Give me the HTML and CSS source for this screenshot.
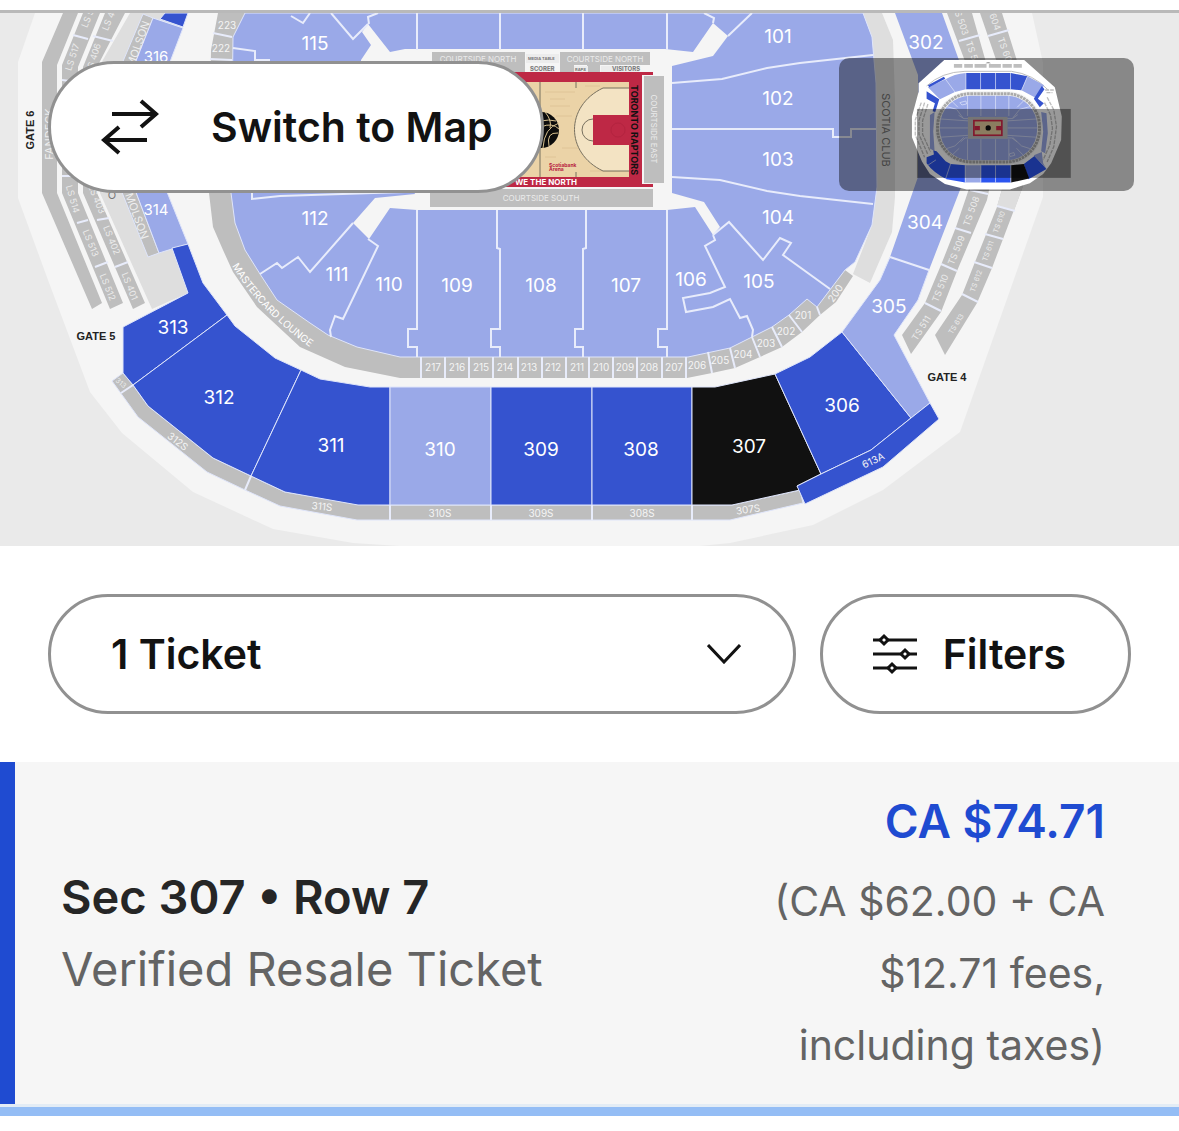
FILE: index.html
```html
<!DOCTYPE html>
<html lang="en">
<head>
    <meta charset="UTF-8">
    <meta name="viewport" content="width=device-width, initial-scale=1.0">
    <title>Tickets</title>
    <link rel="stylesheet" href="styles.css">
</head>
<body>
    <div class="map-panel">
        <!-- Seat map -->
        <svg class="seat-map" viewBox="0 13 1179 533" role="img" aria-label="Seat map">
            <polygon class="ground" points="35,13 18,62 18,198 48,280 90,392 122,433 193,492 273,529 353,543 400,546 700,546 730,543 813,525 883,490 960,432 1043,197 1043,63 1032,13"/>

            <!-- West side suites -->
            <polygon class="pale" points="130,13 188,13 160,75 160,170 172,248 188,293 152,309 100,193 100,65"/>
            <polygon class="grey" points="63,13 42,62 42,193 92,309 102,303 57,193 57,65 78,13"/>
            <polygon class="grey" points="83,13 62,65 62,193 110,309 123,303 78,193 78,67 100,13"/>
            <polygon class="grey" points="105,13 83,67 83,193 133,309 145,303 97,193 97,67 125,13"/>
            <polygon class="grey edge" points="143,14 153,18 134,66 134,187 159,253 148,257 121,190 121,66"/>
            <path class="line" d="M73,35 88,39M93,36 113,41M62,80 78,82M62,176 78,176M77,223 88,220M95,267 108,262M97,220 109,218M115,267 128,262"/>

            <!-- 300 level -->
            <polygon class="dark edge" points="165,13 160,19 183,27 188,13"/>
            <polygon class="light edge" points="153,18 183,28 165,75 165,187 188,244 159,253 134,187 134,66"/>
            <polygon class="grey edge" points="112,381 123,373 133,385 148,406 213,458 251,476 285,492 358,504 390,505 732,505 800,490 803,503 730,520 357,520 280,506 245,490 207,472 138,417"/>
            <polygon class="dark edge" points="172,248 188,244 203,283 227,315 133,385 123,373 123,327 188,293"/>
            <polygon class="dark edge" points="227,315 235,326 275,358 301,370 251,476 213,458 148,406 133,385"/>
            <polygon class="dark edge" points="301,370 320,379 370,387 390,387 390,505 358,505 285,492 251,476"/>
            <polygon class="light edge" points="390,387 491,387 491,505 390,505"/>
            <polygon class="dark edge" points="491,387 592,387 592,505 491,505"/>
            <polygon class="dark edge" points="592,387 692,387 692,505 592,505"/>
            <polygon class="picked edge" points="692,387 715,387 775,374 821,474 797,486 800,490 732,505 692,505"/>
            <polygon class="dark edge" points="775,374 810,357 842,332 911,418 871,450 821,474"/>
            <polygon class="light edge" points="842,332 880,280 890,257 929,270 918,300 894,335 930,403 911,418"/>
            <polygon class="dark edge" points="797,486 821,474 871,450 911,418 930,403 939,419 883,467 805,504"/>
            <polygon class="light" points="895,13 942,13 965,77 965,177 929,270 890,257 918,177 918,75"/>
            <path class="line" d="M890,257 929,270M133,385 121,393M251,476 245,490M390,505V520M491,505V520M592,505V520M692,505V520"/>

            <!-- East side suites -->
            <polygon class="grey" points="947,13 972,80 972,180 956,227 941,265 925,303 902,335 911,354 941,312 957,271 987,200 991,180 991,80 972,13"/>
            <polygon class="grey" points="980,13 1003,80 1003,186 997,207 975,262 962,295 935,335 945,355 977,303 992,268 1014,210 1023,186 1023,80 1002,13"/>
            <polygon class="pale" points="1003,186 1023,186 1014,211 997,206"/>
            <path class="line" d="M959,41 980,35M988,36 1009,30M970,190 988,194M955,228 971,233M941,264 957,271M925,303 941,311M997,206 1015,211M985,234 1003,239M974,262 992,268M962,294 978,302"/>
            <polygon class="pale" points="863,13 882,13 893,40 895,100 895,197 892,232 870,283 853,274 872,225 877,187 876,83 872,37"/>

            <!-- 200 level ring -->
            <polygon class="grey" points="218,13 211,50 209,193 213,227 223,250 233,272 257,307 300,347 345,367 400,378 687,378 712,373 735,368 760,357 782,347 802,332 820,315 836,302 853,276 845,270 700,200 300,13"/>

            <!-- 100 level bowl -->
            <polygon class="light edge" points="245,13 233,37 231,193 235,223 245,250 260,274 277,300 310,323 328,335 357,347 400,357 688,357 730,348 752,337 772,327 789,315 807,299 817,307 845,270 855,262 872,225 877,187 876,83 872,37 863,13"/>
            <polygon class="ground" points="368,24 362,32 371,45 361,60 361,196 375,198 353,223 369,239 390,208 417,210 667,210 695,207 713,235 720,227 704,202 672,193 672,66 713,56 728,36 713,23 693,52 665,49 405,49 390,52"/>
            <polygon class="light" points="240,62 361,62 415,194 375,198 240,198"/>
            <path class="line" d="M417,13V50M500,13V50M583,13V50M667,13V50
                M417,210V329H408V347H417V357M497,210V248L500,249V329H491V347H500V357M586,210V248L583,249V329H575V347H583V357M667,210V329H658V347H667V357
                M368,239 378,246 343,319 335,316 330,330 331,337M353,223 310,272 298,257 282,268 277,263 260,274
                M252,186V199L280,196 405,192M233,48 255,51V60H270M291,16 303,23 310,13M331,13 353,39 368,24M378,13 368,17 369,24
                M752,13 728,36M704,13 714,18 713,23M672,83 722,79 767,68 800,63 873,55M672,129H833V137H851V129H876M672,177 720,180 767,191 800,196 873,204
                M713,235 729,222 763,260 780,238 791,243 783,255 830,289M713,235 715,240 705,246 725,287 710,293 683,298 686,312 713,307 730,299 740,318 747,316 753,330 752,337"/>
            <path class="line" d="M213,33 232,37M210,59 232,60M421,357V378M445,357V378M469,357V378M493,357V378M518,357V378M542,357V378M566,357V378M589,357V378M613,357V378M637,357V378M662,357V378M686,357V378M708,352 712,373M730,348 735,368M752,337 760,357M772,327 782,347M789,315 802,332M817,307 820,315"/>

            <!-- Court -->
            <path class="grey" d="M432,52H525V73H432ZM560,52H650V65H600V72H587V65H574V72H560ZM430,189H653V207H430ZM644,76H664V183H644Z"/>
            <path class="table" d="M526,54H559V63H526ZM530,66H555V72H530ZM574,66H588V72H574ZM601,66H639V72H601Z"/>
            <path class="red" d="M430,72H653V75H642V184H653V187H430Z"/>
            <rect class="wood" x="440" y="82" width="189" height="95"/>
            <path class="grain" d="M545,92H575M550,99H565M585,86H600M550,106H570M556,116H572M562,148H578M545,157H556M590,171H620"/>
            <path class="three" d="M629,88H603C565,106 565,153 603,171H629"/>
            <circle class="thin" cx="593" cy="130" r="11"/>
            <rect class="red" x="593" y="115" width="36" height="30"/>
            <circle cx="618" cy="130" r="7" fill="none" stroke="#b3233f"/>
            <path class="thin" d="M540,82V177M576,82V88M576,172V177"/>
            <circle cx="541" cy="130" r="18" fill="#0c0c0c"/>
            <path class="seam" d="M541,121Q549,119 556,121M541,127Q552,122 559,129M543,148Q544,128 559,123M549,146Q546,132 558,133M545,112Q552,120 550,128"/>
            <text class="court-text red-text" x="549" y="167">Scotiabank</text>
            <text class="court-text red-text" x="549" y="171">Arena</text>
            <text class="north" x="546" y="182">WE THE NORTH</text>
            <text class="raptors" transform="translate(634 130) rotate(90)">TORONTO RAPTORS</text>

            <!-- Labels -->
            <g class="label">
                <text x="315" y="43">115</text><text x="778" y="36">101</text><text x="778" y="98">102</text><text x="778" y="159">103</text>
                <text x="778" y="217">104</text><text x="759" y="281">105</text><text x="691" y="279">106</text><text x="626" y="285">107</text>
                <text x="541" y="285">108</text><text x="457" y="285">109</text><text x="389" y="284">110</text><text x="337" y="274">111</text>
                <text x="315" y="218">112</text><text x="926" y="42">302</text><text x="925" y="222">304</text><text x="889" y="306">305</text>
                <text x="842" y="405">306</text><text x="749" y="446">307</text><text x="641" y="449">308</text><text x="541" y="449">309</text>
                <text x="440" y="449">310</text><text x="331" y="445">311</text><text x="219" y="397">312</text><text x="173" y="327">313</text>
            </g>
            <g class="label mid">
                <text x="156" y="56">316</text><text x="156" y="209">314</text>
            </g>
            <g class="label small">
                <text x="227" y="25">223</text><text x="221" y="48">222</text>
                <text x="433" y="367">217</text><text x="457" y="367">216</text><text x="481" y="367">215</text><text x="505" y="367">214</text>
                <text x="529" y="367">213</text><text x="553" y="367">212</text><text x="577" y="367">211</text><text x="601" y="367">210</text>
                <text x="625" y="367">209</text><text x="649" y="367">208</text><text x="674" y="367">207</text><text x="697" y="365">206</text>
                <text x="720" y="360">205</text><text x="743" y="354">204</text><text x="766" y="343">203</text><text x="786" y="331">202</text><text x="803" y="315">201</text>
                <text transform="translate(835 293) rotate(-55)">200</text>
                <text transform="translate(178 441) rotate(38)">312S</text><text transform="translate(322 506) rotate(6)">311S</text>
                <text x="440" y="513">310S</text><text x="541" y="513">309S</text><text x="642" y="513">308S</text><text transform="translate(748 509) rotate(-8)">307S</text>
                <text transform="translate(873 460) rotate(-25)">613A</text>
            </g>
            <g class="label suite">
                <text transform="translate(72 57) rotate(-72)">LS 517</text><text transform="translate(89 14) rotate(-68)">LS 518</text>
                <text transform="translate(93 58) rotate(-72)">LS 406</text><text transform="translate(110 16) rotate(-68)">LS 407</text>
                <text transform="translate(73 199) rotate(74)">LS 514</text><text transform="translate(91 243) rotate(68)">LS 513</text><text transform="translate(108 287) rotate(68)">LS 512</text>
                <text transform="translate(97 199) rotate(68)">LS 403</text><text transform="translate(112 240) rotate(68)">LS 402</text><text transform="translate(130 286) rotate(68)">LS 401</text>
                <text transform="translate(961 20) rotate(70)">TS 503</text><text transform="translate(974 56) rotate(70)">TS 504</text>
                <text transform="translate(993 15) rotate(70)">TS 604</text><text transform="translate(1006 52) rotate(70)">TS 605</text>
                <text transform="translate(971 211) rotate(-70)">TS 508</text><text transform="translate(956 250) rotate(-68)">TS 509</text><text transform="translate(940 288) rotate(-68)">TS 510</text><text transform="translate(921 328) rotate(-58)">TS 511</text>
                <g class="tiny">
                    <text transform="translate(121 383) rotate(40)">313</text>
                    <text transform="translate(999 222) rotate(-70)">TS 610</text><text transform="translate(988 251) rotate(-70)">TS 611</text><text transform="translate(976 281) rotate(-70)">TS 612</text><text transform="translate(956 324) rotate(-58)">TS 613</text>
                </g>
                <text class="courtside" x="541" y="198">COURTSIDE SOUTH</text><text class="courtside" x="478" y="59">COURTSIDE NORTH</text><text class="courtside" x="605" y="59">COURTSIDE NORTH</text>
                <text class="courtside" transform="translate(654 129) rotate(90)">COURTSIDE EAST</text>
            </g>
            <g class="label lounge">
                <text transform="translate(138 44) rotate(-70)">MOLSON</text><text transform="translate(137 216) rotate(70)">MOLSON</text>
                <text transform="translate(49 134) rotate(-90)">FANDECK</text>
            </g>
            <path id="loungeArc" d="M232,266Q262,315 320,354" fill="none"/>
            <text class="lounge-text"><textPath href="#loungeArc">MASTERCARD LOUNGE</textPath></text>
            <g class="court-text">
                <text x="528" y="60">MEDIA TABLE</text><text class="wide" x="530" y="71">SCORER</text><text x="575" y="71">RAPS</text><text class="wide" x="612" y="71">VISITORS</text>
            </g>
            <text class="scotia" transform="translate(886 130) rotate(90)">SCOTIA CLUB</text>
            <text class="scotia" x="112" y="195">O</text>
            <g class="gate">
                <text transform="translate(30 130) rotate(-90)">GATE 6</text><text x="96" y="336">GATE 5</text><text x="947" y="377">GATE 4</text>
            </g>
        </svg>

        <button class="pill switch-btn" type="button">
            <svg class="switch-icon" viewBox="0 0 58 56" aria-hidden="true">
                <path d="M11,15H55M40,2 55,15 40,28M46,41H3M18,28 3,41 18,54"/>
            </svg>
            Switch to Map
        </button>

        <!-- Overview with the visible area shaded -->
        <svg class="mini-map" viewBox="27 24 885 399" role="img" aria-label="Map overview">
            <polygon fill="#fff" points="343,30 583,30 675,112 696,200 694,270 664,340 640,372 600,400 540,419 410,419 345,402 300,372 276,335 246,262 246,200 266,125 266,100"/>
            <path class="mini-grey" d="M372,42H397V53H372ZM403,42H429V53H403ZM434,42H470V53H434ZM477,42H513V53H477ZM518,42H546V53H518ZM551,42H576V53H551Z"/>
            <path d="M467,40Q475,33 483,40Z" fill="#777"/>
            <path class="mini-outline" d="M290,108Q335,66 405,64H545Q610,72 655,120"/>
            <path class="mini-light" d="M408,69V118L375,126 347,88Q372,72 408,69ZM347,88 375,126 330,148 294,112ZM593,79 643,106 617,143 575,121ZM300,195 314,186 310,245 314,304 300,296ZM634,186 650,190 654,250 646,310 634,304 640,245Z"/>
            <path class="mini-dark" d="M408,69H543L593,79 575,121 543,118H408ZM294,106 342,80 346,86 298,112ZM290,124 328,148 316,186 308,184 315,160 290,146ZM636,108 644,118 624,146 642,160 630,172 612,146Z"/>
            <path class="mini-deep" d="M290,322 312,314 310,302 320,304 347,334 362,342 406,346V398L350,388Q310,368 290,340ZM453,346H543V398H453ZM582,342 614,318 650,357 596,388Z"/>
            <path class="mini-light" d="M406,346H453V398H406ZM612,316 636,306 640,340 650,357Z"/>
            <path d="M543,346 582,342 598,386 543,398Z" fill="#111"/>
            <path class="mini-line" d="M408,69V118M452,69V118M497,69V118M542,69V118M593,79 575,121M347,88 375,126M406,346V398M453,346V398M497,346V398M543,346V398M362,342 347,387M318,330 294,346"/>
            <rect class="mini-ring" x="318" y="127" width="316" height="213" rx="104"/>
            <rect class="mini-light" x="330" y="137" width="292" height="194" rx="92"/>
            <rect class="mini-dots" x="323" y="131" width="306" height="205" rx="99"/>
            <path class="mini-line" d="M413,137V198M453,135V198M497,135V198M537,137V198M413,268V330M453,268V332M497,268V332M537,268V330M330,207 418,213M328,234H415M330,262 418,256M622,207 530,213M624,234H533M622,262 530,256M350,170 380,178 400,205M600,170 570,178 548,205M350,296 375,288 402,262M600,296 575,288 548,262M362,150 384,172M584,150 562,172M362,320 388,295M584,320 560,295M390,158 408,153 410,162 396,165ZM538,312 552,308 555,316 541,320Z"/>
            <path class="mini-line" d="M386,196 402,206H548L564,194M392,276 406,264H546L562,276" stroke-width="5"/>
            <rect x="414" y="201" width="119" height="65" fill="#c4c4c4"/>
            <rect x="432" y="212" width="84" height="44" fill="#e8cfa0" stroke="#d8284b" stroke-width="5"/>
            <path d="M434,228H450V241H434ZM499,228H515V241H499Z" fill="#d8284b"/>
            <circle cx="475" cy="234" r="8" fill="#111"/>
            <path class="mini-side" d="M274,158 256,210V255L284,322M284,158 267,212V253L294,314M294,162 278,212V253L302,306M652,142 672,180 680,230 672,290 652,336M644,158 662,195 668,235 660,285 640,330M646,120H672M650,128H668"/>
            <rect x="261" y="177" width="462" height="207" fill="#000" opacity=".4"/>
        </svg>
    </div>

    <form class="controls">
        <div class="select-wrap">
            <select class="pill ticket-select" aria-label="Number of tickets">
                <option>1 Ticket</option>
                <option>2 Tickets</option>
            </select>
            <svg class="chevron" viewBox="0 0 34 20" aria-hidden="true"><path d="M1,1 17,18 33,1"/></svg>
        </div>
        <button class="pill filter-btn" type="button">
            <svg class="filter-icon" viewBox="0 0 44 42" aria-hidden="true">
                <path d="M0,7H44M0,21H44M0,35H44"/>
                <path class="knob" d="M11,3 15,7 11,11 7,7ZM32,17 36,21 32,25 28,21ZM19,31 23,35 19,39 15,35Z"/>
            </svg>
            Filters
        </button>
    </form>

    <ul class="listings">
        <li class="listing">
            <div class="seat">
                <h2>Sec 307 • Row 7</h2>
                <p>Verified Resale Ticket</p>
            </div>
            <div class="price">
                <strong>CA $74.71</strong>
                <p>(CA $62.00 + CA $12.71 fees, including taxes)</p>
            </div>
        </li>
    </ul>
</body>
</html>
```
FILE: styles.css
```css
* {
    box-sizing: border-box;
}

body {
    margin: 0;
    padding-top: 10px;
    background-color: #fff;
    color: #121212;
    font-family: Inter, "Liberation Sans", sans-serif;
}

h2, p, ul {
    margin: 0;
    padding: 0;
}

/* Map */
.map-panel {
    position: relative;
    border-top: 3px solid #b9b9b9;
    background-color: #eaeaea;
}

.seat-map {
    display: block;
    width: 100%;
}

.ground { fill: #f5f5f5; }
.grey { fill: #bebebe; }
.pale { fill: #dedede; }
.light { fill: #9aa9e8; }
.dark { fill: #3553cf; }
.picked { fill: #111; }

.edge {
    stroke: #dfe5fa;
    stroke-width: 1;
}

.line {
    fill: none;
    stroke: #e8ecfb;
    stroke-width: 2;
}

.red { fill: #be2845; }
.wood { fill: #ebd3a7; }
.table { fill: #ececec; }

.grain {
    stroke: #dfc497;
    stroke-width: 1;
}

.three {
    fill: #f3e3c3;
    stroke: #77705f;
    stroke-width: 1;
}

.thin {
    fill: none;
    stroke: #77705f;
    stroke-width: 1;
}

.seam {
    fill: none;
    stroke: #d8c18f;
    stroke-width: 1;
}

.label {
    fill: #fff;
    font-size: 19px;
    text-anchor: middle;
    dominant-baseline: central;
}

.mid { font-size: 15px; }

.small {
    font-size: 10px;
    fill: #f5f5f5;
}

.suite {
    font-size: 9px;
    fill: #ebebeb;
}

.courtside { font-size: 8px; }
.tiny { font-size: 7px; }

.lounge {
    font-size: 11px;
    fill: #eee;
}

.lounge-text {
    fill: #fff;
    font-size: 10px;
}

.court-text {
    font-size: 4px;
    font-weight: 700;
    fill: #777;
}

.wide { font-size: 6px; }
.red-text { fill: #b8213f; font-size: 5px; }

.north, .raptors {
    font-size: 8px;
    font-weight: 700;
    fill: #fff;
    dominant-baseline: central;
}

.north { text-anchor: middle; }

.raptors {
    font-size: 9px;
    fill: #111;
    text-anchor: middle;
}

.scotia {
    font-size: 11px;
    fill: #777;
    text-anchor: middle;
    dominant-baseline: central;
}

.gate {
    font-family: "Liberation Sans", Arial, sans-serif;
    font-size: 11px;
    font-weight: 700;
    fill: #222;
    text-anchor: middle;
    dominant-baseline: central;
}

.mini-map {
    position: absolute;
    top: 45px;
    right: 45px;
    width: 25%;
    border-radius: 10px;
    background-color: rgba(0, 0, 0, 0.42);
}

.mini-grey { fill: #bebebe; }
.mini-light { fill: #9aa9e8; }
.mini-dark { fill: #3553cf; }
.mini-deep { fill: #2c55f0; }

.mini-outline, .mini-side, .mini-dots, .mini-ring, .mini-line {
    fill: none;
    stroke: #bebebe;
    stroke-width: 3;
}

.mini-line { stroke: #e4e9fb; stroke-width: 2; }
.mini-ring { fill: #f5f5f5; stroke: #f5f5f5; stroke-width: 8; }
.mini-dots { stroke: #aaa; stroke-width: 9; stroke-dasharray: 8 2; }
.mini-side { stroke-width: 4; stroke-dasharray: 12 3; }

/* Buttons */
.pill {
    display: flex;
    align-items: center;
    justify-content: center;
    border: 3px solid #919191;
    border-radius: 66px;
    background-color: #fff;
    color: #121212;
    font: 600 41px Inter, "Liberation Sans", sans-serif;
    white-space: nowrap;
    cursor: pointer;
}

.switch-btn {
    position: absolute;
    top: 48px;
    left: 48px;
    gap: 52px;
    height: 132px;
    padding: 0 48px 0 50px;
}

.switch-icon, .chevron, .filter-icon {
    fill: none;
    stroke: #121212;
    stroke-width: 4;
}

.switch-icon { width: 58px; height: 56px; }

.controls {
    display: flex;
    gap: 24px;
    padding: 48px;
}

.select-wrap {
    position: relative;
    flex: 1;
}

.ticket-select {
    appearance: none;
    width: 100%;
    height: 120px;
    padding: 0 60px;
}

.chevron {
    position: absolute;
    top: 50px;
    right: 55px;
    width: 34px;
    height: 20px;
    stroke-width: 3;
    pointer-events: none;
}

.filter-btn {
    gap: 26px;
    height: 120px;
    padding: 0 62px 0 50px;
}

.filter-icon {
    width: 44px;
    height: 42px;
    stroke-width: 3;
}

.knob { fill: #fff; }

/* Listings */
.listings {
    list-style: none;
}

.listing {
    display: flex;
    align-items: center;
    justify-content: space-between;
    padding: 23px 74px 23px 46px;
    border-left: 15px solid #1f4bd1;
    background-color: #f6f6f6;
}

.listings::after {
    content: "";
    display: block;
    height: 9px;
    border-top: 3px solid #e3ecf5;
    background-color: #94bdf5;
}

.seat h2, .seat p, .price {
    line-height: 72px;
}

.seat h2 {
    color: #262626;
    font-size: 47px;
    font-weight: 600;
}

.seat p {
    color: #646464;
    font-size: 47px;
}

.price {
    width: 340px;
    color: #646464;
    font-size: 41px;
    text-align: right;
}

.price strong {
    display: block;
    margin-bottom: 8px;
    color: #1f4bd1;
    font-size: 46px;
    font-weight: 600;
}
```
